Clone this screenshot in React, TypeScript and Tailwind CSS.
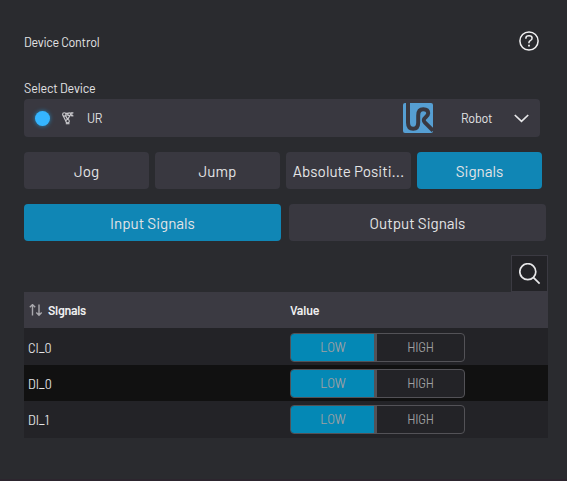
import React from 'react';

const tabs = [
  { label: 'Jog' },
  { label: 'Jump' },
  { label: 'Absolute Positi...' },
  { label: 'Signals', active: true },
];

const rows = ['CI_0', 'DI_0', 'DI_1'];

function HelpIcon() {
  return (
    <svg width="20" height="20" viewBox="0 0 20 20" fill="none" stroke="#f1f1f2" strokeWidth="1.5">
      <circle cx="10" cy="10" r="9.1" />
      <path d="M6.9 7.7V7Q6.9 4.8 10 4.8T13.1 7Q13.1 8.5 11.6 9.3Q10 10.1 10 11.3V12.2" />
      <path d="M10 13.8V15.6" strokeWidth="1.8" />
    </svg>
  );
}

function ArmIcon() {
  return (
    <svg width="12" height="13" viewBox="0 0 12 13" fill="none" stroke="#c9c8cc" strokeWidth="1.15">
      <circle cx="2.3" cy="2.4" r="1.7" />
      <circle cx="7.2" cy="2.2" r="1.4" />
      <path d="M3.8 1.3H6M3.9 3H6M8.5 .9H11.4M8.5 3.6L11.4 3.9M9.8 1V3.6" />
      <path d="M1.3 3.9L3.9 9.2M3.5 3.6L5.8 7.6M7.8 3.8L5.6 7.6" />
      <circle cx="5.6" cy="9.2" r="1.7" />
      <path d="M3.8 11.7H7.5" />
    </svg>
  );
}

function RobotLogo() {
  return (
    <svg width="30" height="30" viewBox="0 0 30 30" fill="none">
      <rect width="30" height="30" rx="2" fill="#569fd3" />
      <path
        d="M5 0V19.5Q5 25.7 10.2 25.7Q15.2 25.7 15.2 19.5V12.5Q15.2 6.3 20.3 6.3Q25.2 6.3 25.2 10.3C25.2 13.7 20.8 14.7 20.8 17Q20.8 18.5 22 19.7L30 27.7"
        stroke="#393840"
        strokeWidth="4"
      />
    </svg>
  );
}

function Toggle() {
  return (
    <div className="flex h-[29px] w-[175px] overflow-hidden rounded-[4px] border border-[#535257] bg-[#232327] text-[12.5px] leading-[27px] text-[#a0a0a2]">
      <div className="w-[83px] bg-[#0488b5] pl-px text-center tracking-[-0.15px]">LOW</div>
      <div className="w-[3px] bg-[#535257]" />
      <div className="flex-1 text-center tracking-[-0.25px]">HIGH</div>
    </div>
  );
}

export default function App() {
  return (
    <main className="h-[481px] w-[567px] overflow-hidden border-b-2 border-[#2c252e] bg-[#2a2b2f] pl-6 font-[Barlow,Roboto,sans-serif] text-[12.5px] text-[#e4e4e6]">
      <header className="flex h-[81px] w-[515px] justify-between pt-[31px]">
        <h1 className="h-5 pt-[2px] leading-[18px] tracking-[-0.25px]">Device Control</h1>
        <HelpIcon />
      </header>
      <div className="h-[18px] leading-[15px] tracking-[-0.15px]">Select Device</div>
      <div className="flex h-[38px] w-[516px] items-center rounded-[4px] bg-[#393840]">
        <span className="ml-[10.5px] size-[15px] rounded-full bg-[#35b5ff] shadow-[0_0_4px_#2687bd]" />
        <span className="ml-[12.5px]"><ArmIcon /></span>
        <span className="ml-[13px] w-[316px] tracking-[-0.3px]">UR</span>
        <RobotLogo />
        <span className="ml-[28px] w-[53px] tracking-[-0.25px]">Robot</span>
        <svg width="15" height="9" viewBox="0 0 15 9" fill="none" stroke="#e8e8ea" strokeWidth="1.7">
          <path d="M.8 1L7.5 7.4L14.2 1" />
        </svg>
      </div>

      <nav className="mt-[15px] flex gap-[6px] text-[15.2px]">
        {tabs.map((t) => (
          <button key={t.label} className={`h-[37px] w-[125px] rounded-[4px] pt-px whitespace-nowrap ${t.active ? 'bg-[#1086b5]' : 'bg-[#393840]'}`}>
            {t.label}
          </button>
        ))}
      </nav>
      <div className="mt-[15px] flex gap-2 text-[15.2px]">
        <button className="h-[37px] w-[257px] rounded-[4px] bg-[#1086b5] pt-px">Input Signals</button>
        <button className="h-[37px] w-[257px] rounded-[4px] bg-[#393840] pt-px">Output Signals</button>
      </div>

      <section className="mt-[14px] w-[524px]">
        <div className="flex justify-end">
          <button className="grid size-[37px] place-items-center border border-[#3b3a42] bg-[#232327]">
            <svg width="22" height="22" viewBox="0 0 22 22" fill="none" stroke="#e7e7e9" strokeWidth="1.7">
              <circle cx="8.3" cy="8.2" r="8" className="translate-x-[.5px] translate-y-[.5px]" />
              <path d="M14.3 14.3L20.6 20.6" />
            </svg>
          </button>
        </div>
        <div className="flex h-[36px] items-center bg-[#3b3a42] font-semibold text-[#f0f0f1]">
          <svg className="ml-[5px]" width="14" height="13" viewBox="0 0 14 13" fill="none" stroke="#aaa9ae" strokeWidth="1.4">
            <path d="M3.5 11.5V.8M.8 3.3L3.5 .6L6.2 3.3M10 .5V11M7.3 8.5L10 11.2L12.7 8.5" />
          </svg>
          <span className="ml-[5px] w-[242px] tracking-[-0.3px]">Signals</span>
          <span className="tracking-[-0.1px]">Value</span>
        </div>
        {rows.map((name, i) => (
          <div key={name} className={`flex items-center ${i === 1 ? 'h-[36px] bg-[#111111]' : i === 0 ? 'h-[37px] bg-[#232327] pt-px' : 'h-[37px] bg-[#232327]'}`}>
            <span className={`w-[266px] pl-[4px] tracking-[-0.1px] ${i === 2 ? 'pt-px' : 'pt-[2px]'}`}>{name}</span>
            <Toggle />
          </div>
        ))}
      </section>
    </main>
  );
}
